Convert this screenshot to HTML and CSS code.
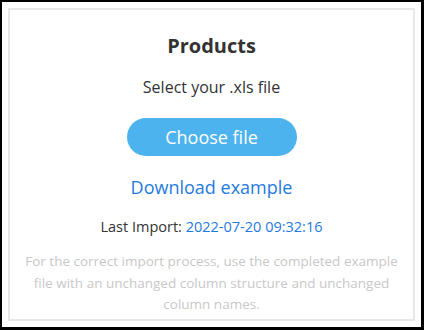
FILE: index.html
```html
<!DOCTYPE html>
<html lang="en">
<head>
    <meta charset="UTF-8">
    <meta name="viewport" content="width=device-width, initial-scale=1.0">
    <title>Products import</title>
    <link rel="stylesheet" href="styles.css">
</head>
<body>

<div class="frame">
    <section class="import-card">
        <h2>Products</h2>
        <p class="hint">Select your .xls file</p>
        <button class="choose-btn">Choose file</button>
        <a class="download" href="#">Download example</a>
        <p class="last-import">Last Import: <span>2022-07-20 09:32:16</span></p>
        <p class="note">For the correct import process, use the completed example file with an unchanged column structure and unchanged column names.</p>
    </section>
</div>

</body>
</html>
```

FILE: styles.css
```css
html, body {
    margin: 0;
    padding: 0;
    background-color: #000;
}

body {
    font-family: 'Open Sans', sans-serif;
    color: #333;
}

.frame {
    width: 419px;
    height: 325px;
    margin: 2px 0 0 2px;
    background-color: white;
    padding: 6px;
    box-sizing: border-box;
}

.import-card {
    height: 100%;
    box-sizing: border-box;
    border: 2px solid #e8e8e8;
    text-align: center;
    padding: 22px 12px 0;
}

.import-card h2 {
    margin: 0;
    font-size: 20px;
    font-weight: 700;
    color: #333;
    line-height: 28px;
}

.hint {
    margin: 16px 0 0;
    font-size: 16px;
    line-height: 22px;
}

.choose-btn {
    display: block;
    margin: 20px auto 0;
    width: 170px;
    height: 38px;
    border: none;
    border-radius: 19px;
    background-color: #4db3ee;
    color: white;
    font-family: 'Open Sans', sans-serif;
    font-size: 18px;
}

.download {
    display: block;
    margin-top: 19px;
    font-size: 18px;
    line-height: 24px;
    color: #1f7ae0;
    text-decoration: none;
}

.last-import {
    margin: 18px 0 0;
    font-size: 14.5px;
    line-height: 20px;
}

.last-import span {
    color: #1f7ae0;
}

.note {
    margin: 14px 0 0;
    font-size: 13.5px;
    line-height: 21.5px;
    color: #c8c8c8;
}
```
